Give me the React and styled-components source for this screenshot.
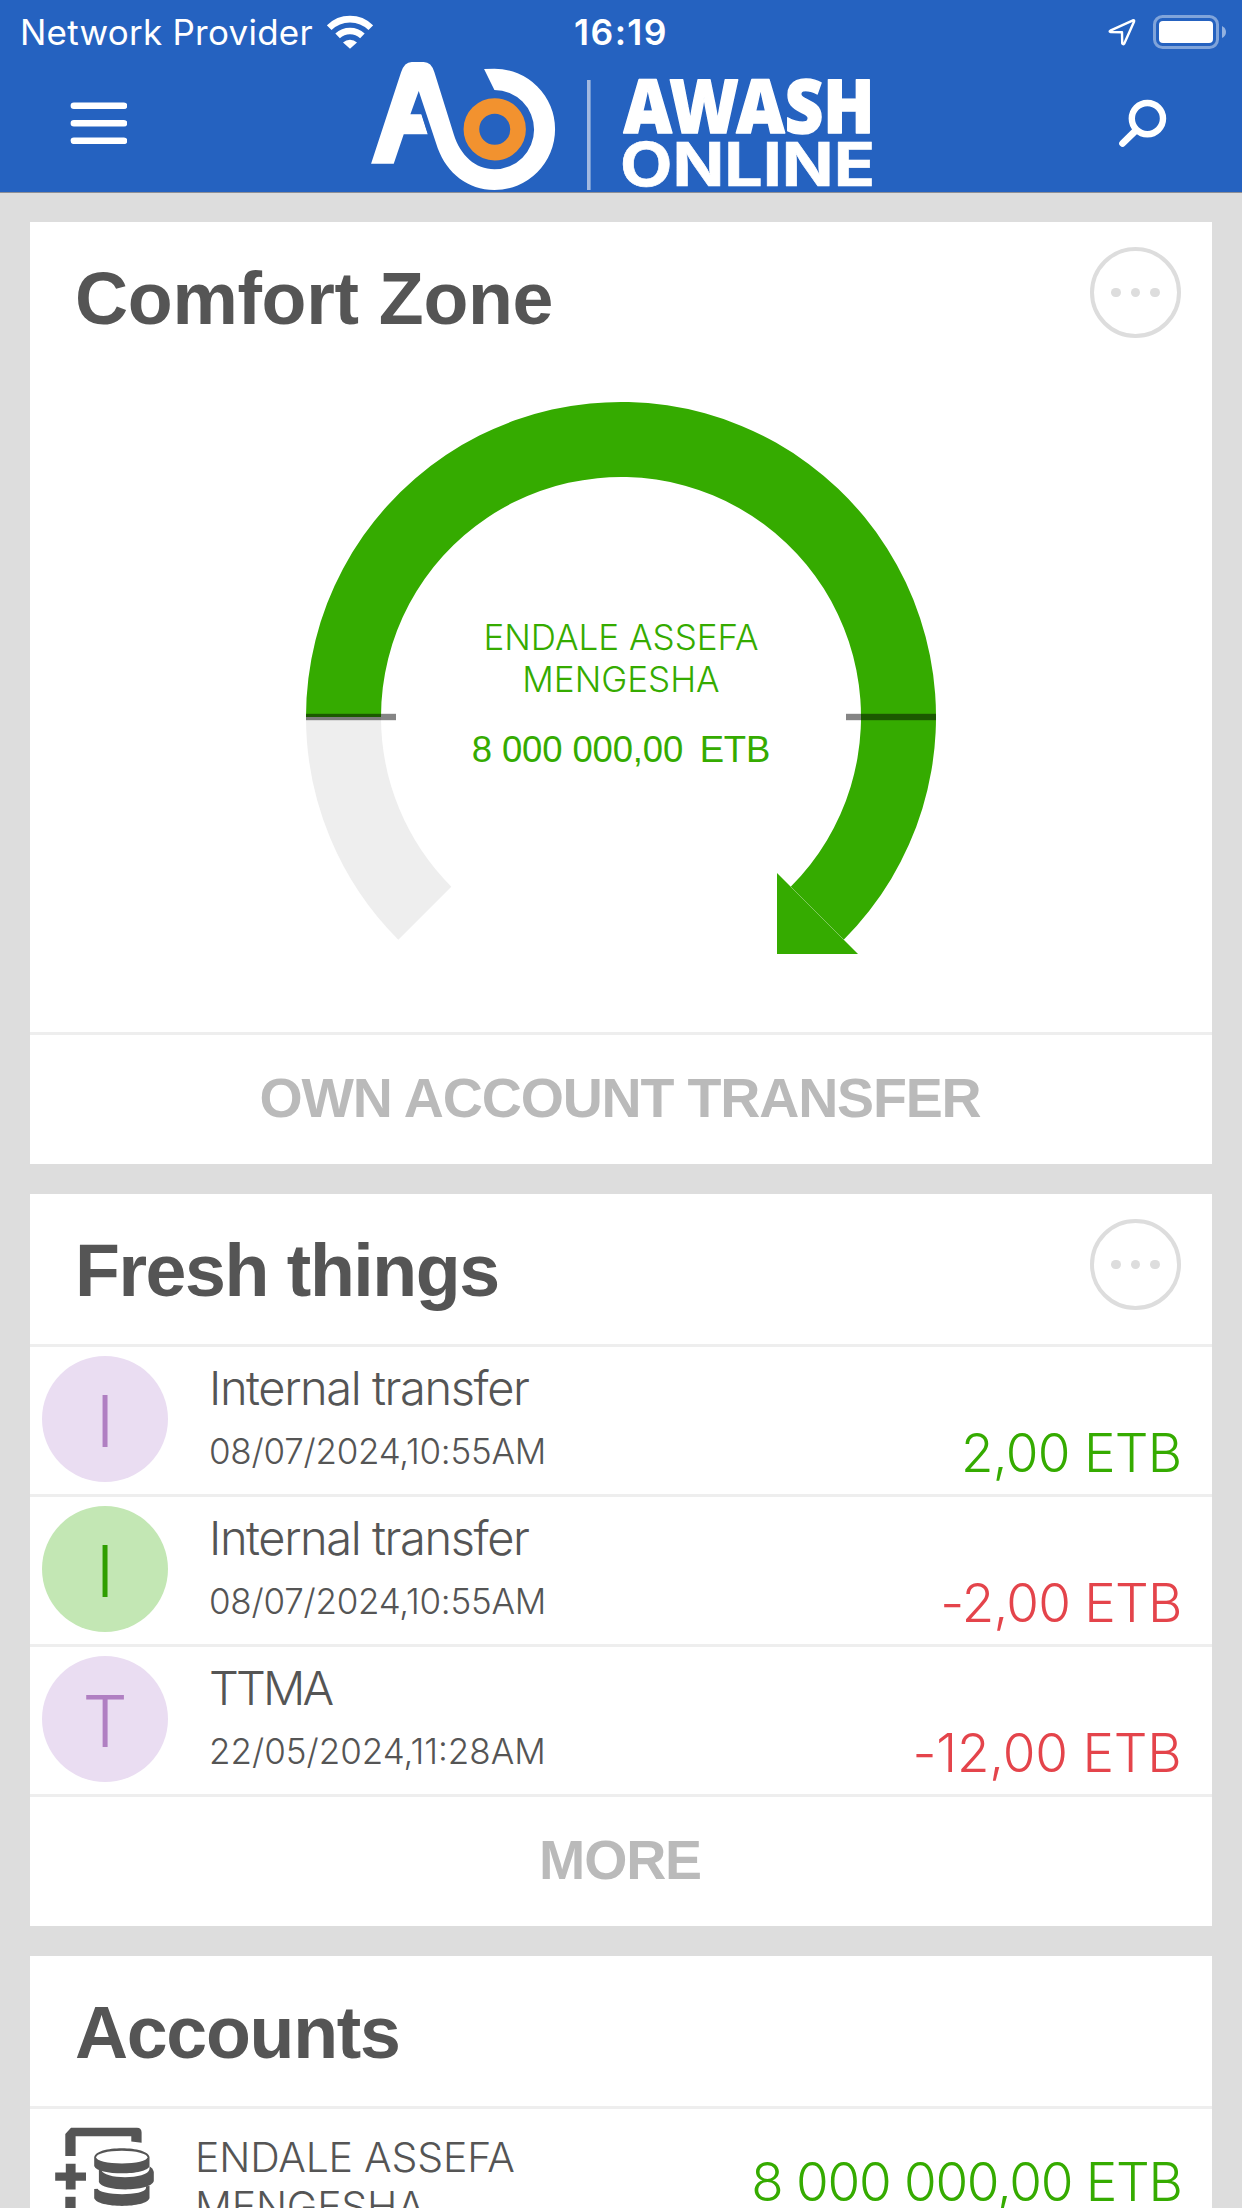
import React from "react";
import styled, { createGlobalStyle } from "styled-components";

const light = '"Inter", "Liberation Sans", sans-serif';
const grotesk = '"Liberation Sans", Arial, sans-serif';
const green = "#35ab00";
const red = "#e4444b";
const ink = "#555";

const GlobalStyle = createGlobalStyle`
  *, *::before, *::after { box-sizing: border-box; }
  body { margin: 0; background: #ddd; }
`;

const Screen = styled.div`
  width: 1242px;
  height: 2208px;
  overflow: hidden;
  background: #ddd;
  font-family: ${light};
  font-weight: 300;
  color: ${ink};
`;

const Header = styled.header`
  height: 193px;
  background: #2562c0;
  border-bottom: 1px solid #8d8f96;
  color: #fff;
`;

const StatusBar = styled.div`
  display: grid;
  grid-template-columns: 1fr auto 1fr;
  align-items: center;
  height: 60px;
  padding: 0 16px 0 20px;
`;

const Carrier = styled.div`
  display: flex;
  align-items: center;
  gap: 14px;
  font-size: 35px;
  font-weight: 400;
  letter-spacing: 0.25px;
  line-height: 62px;
  white-space: nowrap;
`;

const Clock = styled.div`
  margin-right: 4px;
  padding-top: 2px;
  font-size: 35.5px;
  font-weight: 600;
  letter-spacing: 1.4px;
  line-height: 62px;
`;

const StatusIcons = styled.div`
  display: flex;
  justify-content: flex-end;
  align-items: center;
  gap: 17px;
`;

const NavBar = styled.div`
  display: grid;
  grid-template-columns: 1fr 502px 1fr;
  height: 132px;
  padding: 0 70px;
`;

const IconButton = styled.button`
  display: flex;
  align-items: flex-start;
  justify-self: ${(p) => p.$side};
  margin: 0;
  padding: ${(p) => p.$top}px 0 0;
  border: 0;
  background: none;
`;

const Feed = styled.main`
  display: flex;
  flex-direction: column;
  gap: 30px;
  padding: 29px 30px 0;
`;

const Card = styled.section`
  background: #fff;
`;

const CardHead = styled.div`
  display: flex;
  justify-content: space-between;
  height: 150px;
  padding: 0 31px 0 45px;
`;

const CardTitle = styled.h2`
  margin: 0;
  padding-top: 2px;
  font-family: ${grotesk};
  font-size: 73.5px;
  font-weight: 700;
  letter-spacing: ${(p) => p.$tracking}px;
  line-height: 150px;
`;

const MoreButton = styled.button`
  display: flex;
  align-items: center;
  justify-content: center;
  gap: 10px;
  width: 91px;
  height: 91px;
  margin: 25px 0 0;
  padding: 0;
  border: 4px solid #ddd;
  border-radius: 50%;
  background: none;
`;

const Dot = styled.span`
  width: 9.5px;
  height: 9.5px;
  border-radius: 50%;
  background: #ddd;
`;

const CardAction = styled.button`
  display: block;
  width: 100%;
  height: 132px;
  margin: 0;
  padding: 0 2px 3px 0;
  border: 0;
  border-top: 3px solid #eee;
  background: none;
  color: #bababa;
  font-family: ${grotesk};
  font-size: 55.5px;
  font-weight: 700;
  letter-spacing: -1.15px;
  text-align: center;
`;

const GaugePanel = styled.div`
  display: grid;
  justify-content: center;
  height: 660px;
  > * { grid-area: 1 / 1; }
`;

const GaugeLabel = styled.div`
  padding-top: 244px;
  color: ${green};
  text-align: center;
`;

const Holder = styled.div`
  width: 300px;
  margin: 0 auto;
  font-size: 35px;
  line-height: 42px;
`;

const Balance = styled.div`
  display: flex;
  justify-content: center;
  gap: 16.5px;
  margin-top: 28.5px;
  font-family: ${grotesk};
  font-size: 36.5px;
  font-weight: 400;
  letter-spacing: -0.15px;
  line-height: 42px;
`;

const Row = styled.div`
  display: flex;
  height: 150px;
  padding: 0 30.5px 0 12px;
  border-top: 3px solid #eee;
`;

const Avatar = styled.div`
  width: 126px;
  height: 126px;
  margin: 9px 41px 0 0;
  border-radius: 50%;
  background: ${(p) => (p.$tone === "green" ? "#c3e7b4" : "#eaddf2")};
  color: ${(p) => (p.$tone === "green" ? "#2f9e00" : "#b07fc2")};
  font-size: 71px;
  line-height: 131px;
  text-align: center;
`;

const Details = styled.div`
  flex: 1;
  padding-top: 11px;
`;

const Name = styled.div`
  font-size: 47px;
  letter-spacing: ${(p) => p.$tracking}px;
  line-height: 60px;
`;

const Time = styled.div`
  font-size: 35px;
  letter-spacing: ${(p) => p.$tracking}px;
  line-height: 66px;
`;

const Amount = styled.div`
  padding-top: ${(p) => p.$top}px;
  color: ${(p) => (p.$negative ? red : green)};
  font-size: 53px;
  letter-spacing: ${(p) => p.$tracking}px;
  line-height: 60px;
  white-space: nowrap;
`;

const AccountRow = styled.div`
  display: flex;
  height: 190px;
  padding: 0 30.5px 0 25px;
  border-top: 3px solid #eee;
`;

const AccountIcon = styled.svg`
  flex: none;
  margin-top: 18px;
`;

const AccountName = styled.div`
  width: 340px;
  margin: 0 auto 0 40px;
  padding-top: 24px;
  font-size: 41px;
  letter-spacing: -0.2px;
  line-height: 49px;
`;

const Wifi = () => (
  <svg width="46" height="34" viewBox="326 12.5 46 34">
    <g fill="none" stroke="#fff" strokeWidth="6.6">
      <path d="M328.2 25.2 A29.5 29.5 0 0 1 369.8 25.2" />
      <path d="M336.6 33.4 A18 18 0 0 1 361.4 33.4" />
    </g>
    <path d="M342 40 A10.5 10.5 0 0 1 356 40 L349 46.3 Z" fill="#fff" />
  </svg>
);

const Location = () => (
  <svg width="28" height="28" viewBox="1109 17 28 28">
    <path d="M1111.3 29.7 L1134 19.3 Q1135.6 19 1135 20.8 L1125.3 42.4 Q1124 44 1123.2 42.3 L1123 31.3 L1111.4 31 Q1110 30.4 1111.3 29.7 Z" fill="none" stroke="#fff" strokeWidth="2.4" strokeLinejoin="round" />
  </svg>
);

const Battery = () => (
  <svg width="73" height="34" viewBox="1153 13 73 34">
    <rect x="1154.5" y="14.5" width="63" height="31" rx="8" fill="none" stroke="#fff" strokeOpacity="0.42" strokeWidth="3" />
    <rect x="1159" y="19" width="54" height="22" rx="4" fill="#fff" />
    <path d="M1222 24 Q1226 26 1226 30 Q1226 34 1222 36 Z" fill="#fff" fillOpacity="0.5" />
  </svg>
);

const Logo = () => (
  <svg width="502" height="131" viewBox="370 60 502 131" aria-label="Awash Online">
    <g transform="translate(350.4 40) scale(0.33333)">
      <path d="M62 371 L152 97 Q162 66 184 66 L220 66 Q243 66 252 97 L310 283 C330 347 375 388 432 388 A119 119 0 0 0 432 150 L401 87 L432 86 A182 182 0 0 1 432 450 C352 450 290 400 262 325 L205 153 L180 223 L213 223 L232 283 L160 283 L130 371 Z" fill="#fff" />
      <path d="M213 213 L240 296" stroke="#2562c0" strokeWidth="5" />
      <circle cx="433" cy="268" r="70" fill="none" stroke="#f2922f" strokeWidth="47" />
    </g>
    <rect x="587" y="80" width="3.6" height="110" fill="#a3b9e0" />
    <g fill="#fff" stroke="#fff">
      <text x="623.5" y="133.2" fontFamily='"Noto Sans", sans-serif' fontSize="74" fontWeight="900" strokeWidth="1.4" strokeLinejoin="round" textLength="251" lengthAdjust="spacingAndGlyphs">AWASH</text>
      <text x="620" y="186.3" fontFamily='"Inter", sans-serif' fontSize="61" fontWeight="700" strokeWidth="0.6" textLength="255" lengthAdjust="spacingAndGlyphs">ONLINE</text>
    </g>
  </svg>
);

const Gauge = () => (
  <svg width="630" height="660" viewBox="306 372 630 660">
    <path d="M398.3 939.7 A315 315 0 0 1 306 717 H381 A240 240 0 0 0 451.3 886.7 Z" fill="#eee" />
    <path d="M306 717 A315 315 0 1 1 843.7 939.7 L790.7 886.7 A240 240 0 1 0 381 717 Z" fill={green} />
    <path d="M777 873 L858 954 H777 Z" fill={green} />
    <path d="M790.7 886.7 L843.7 939.7" stroke="#9bd580" strokeWidth="0.5" />
    <g fill="#000" fillOpacity="0.48">
      <rect x="306" y="713.8" width="90" height="6.4" />
      <rect x="846" y="713.8" width="90" height="6.4" />
    </g>
  </svg>
);

const Coins = () => (
  <AccountIcon width="100" height="90" viewBox="55 2127 100 90" fill={ink}>
    <path d="M65.3 2156 V2134 L71 2127.8 H137 Q141.6 2128 141.6 2132.5 V2142.8 L131.3 2141.4 V2136.2 H75.6 V2156 Z" />
    <path d="M65.8 2163.8 H75.6 V2172.4 H86 V2180.8 H75.6 V2189.4 H65.8 V2180.8 H55.2 V2172.4 H65.8 Z" />
    <rect x="65.3" y="2196.8" width="10.3" height="22" />
    <path d="M94.2 2189 V2198 C97 2208.5 147 2208.5 149.5 2198 V2186 Z" />
    <path d="M97.5 2188 C98 2196 145 2196.5 146 2188 V2184 H98 Z" fill="#fff" />
    <path d="M98.9 2168 V2182 C102 2192 151 2192 153.8 2181 V2172 Q153 2168 149 2166 Z" />
    <path d="M101.5 2170 C103 2179.5 148 2180 149.5 2169 V2166 H102 Z" fill="#fff" />
    <path d="M94.2 2157.5 C94.2 2145 149.5 2145 149.5 2157.5 V2166 C147 2175.8 97 2175.8 94.2 2166 Z" />
    <ellipse cx="121.8" cy="2157.2" rx="25.6" ry="6.4" fill="#fff" />
  </AccountIcon>
);

const More = () => (
  <MoreButton aria-label="More options">
    <Dot />
    <Dot />
    <Dot />
  </MoreButton>
);

const transfers = [
  { name: "Internal transfer", nameTracking: -1.43, time: "08/07/2024,10:55AM", timeTracking: -0.25, amount: "2,00 ETB", amountTracking: -0.7, tone: "purple" },
  { name: "Internal transfer", nameTracking: -1.43, time: "08/07/2024,10:55AM", timeTracking: -0.25, amount: "-2,00 ETB", amountTracking: -0.8, tone: "green", negative: true },
  { name: "TTMA", nameTracking: -2.9, time: "22/05/2024,11:28AM", timeTracking: 0, amount: "-12,00 ETB", amountTracking: -0.2, tone: "purple", negative: true },
];

export default function App() {
  return (
    <Screen>
      <GlobalStyle />
      <Header>
        <StatusBar>
          <Carrier>
            Network Provider
            <Wifi />
          </Carrier>
          <Clock>16:19</Clock>
          <StatusIcons>
            <Location />
            <Battery />
          </StatusIcons>
        </StatusBar>
        <NavBar>
          <IconButton $side="start" $top={42} aria-label="Menu">
            <svg width="57" height="42" viewBox="0 0 57 42" stroke="#fff" strokeWidth="6.6" strokeLinecap="round">
              <path d="M3.9 3.8 H54 M3.9 21.3 H54 M3.9 38.8 H54" />
            </svg>
          </IconButton>
          <Logo />
          <IconButton $side="end" $top={38} aria-label="Search">
            <svg width="54" height="50" viewBox="1118 98 54 50" fill="none" stroke="#fff">
              <circle cx="1147.4" cy="118.6" r="15.6" strokeWidth="6.4" />
              <path d="M1135.5 130.8 L1122.6 143.4" strokeWidth="6.8" strokeLinecap="round" />
            </svg>
          </IconButton>
        </NavBar>
      </Header>
      <Feed>
        <Card>
          <CardHead>
            <CardTitle $tracking={-0.3}>Comfort Zone</CardTitle>
            <More />
          </CardHead>
          <GaugePanel>
            <Gauge />
            <GaugeLabel>
              <Holder>ENDALE ASSEFA MENGESHA</Holder>
              <Balance>
                <span>8 000 000,00</span>
                <span>ETB</span>
              </Balance>
            </GaugeLabel>
          </GaugePanel>
          <CardAction>OWN ACCOUNT TRANSFER</CardAction>
        </Card>
        <Card>
          <CardHead>
            <CardTitle $tracking={-1.45}>Fresh things</CardTitle>
            <More />
          </CardHead>
          {transfers.map((t, i) => (
            <Row key={i}>
              <Avatar $tone={t.tone}>{t.name[0]}</Avatar>
              <Details>
                <Name $tracking={t.nameTracking}>{t.name}</Name>
                <Time $tracking={t.timeTracking}>{t.time}</Time>
              </Details>
              <Amount $top={75.5} $negative={t.negative} $tracking={t.amountTracking}>{t.amount}</Amount>
            </Row>
          ))}
          <CardAction>MORE</CardAction>
        </Card>
        <Card>
          <CardHead>
            <CardTitle $tracking={-1.3}>Accounts</CardTitle>
          </CardHead>
          <AccountRow>
            <Coins />
            <AccountName>ENDALE ASSEFA MENGESHA</AccountName>
            <Amount $top={43} $tracking={-1.3}>8 000 000,00 ETB</Amount>
          </AccountRow>
        </Card>
      </Feed>
    </Screen>
  );
}
